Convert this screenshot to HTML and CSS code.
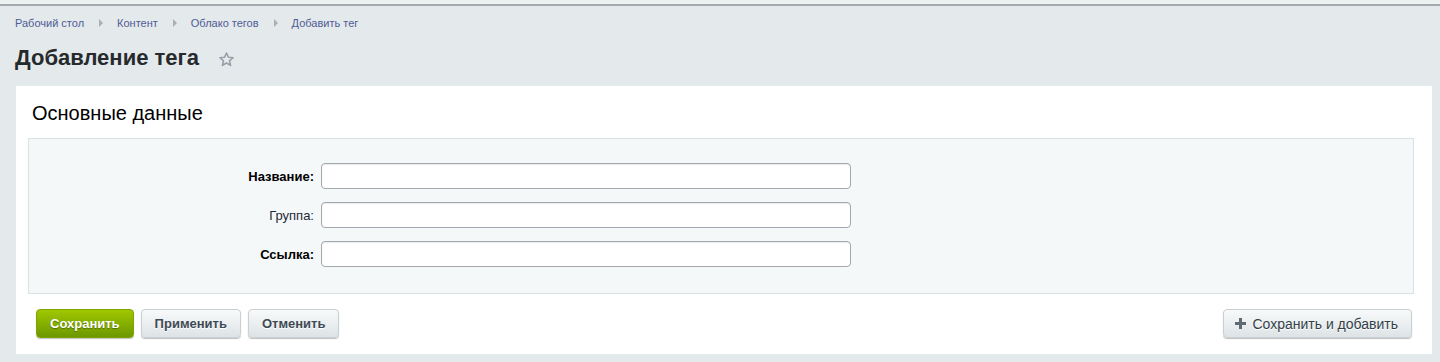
FILE: index.html
```html
<!DOCTYPE html>
<html>

<head>
  <meta name="viewport" content="width=device-width, initial-scale=1">
  <link rel="stylesheet" href="styles.css">
</head>

<body>

  <div class="topline"></div>

  <div class="breadcrumbs">
    <a href="#">Рабочий стол</a>
    <span class="crumb-arrow"></span>
    <a href="#">Контент</a>
    <span class="crumb-arrow"></span>
    <a href="#">Облако тегов</a>
    <span class="crumb-arrow"></span>
    <a href="#">Добавить тег</a>
  </div>

  <h1 class="page-title">
    Добавление тега
    <svg class="star" width="17" height="17" viewBox="0 0 24 24">
      <path d="M12 2.8l2.7 6.1 6.6.6-5 4.4 1.5 6.5L12 17l-5.8 3.4 1.5-6.5-5-4.4 6.6-.6z" fill="none" stroke="#959fa8" stroke-width="2.2" stroke-linejoin="round" />
    </svg>
  </h1>

  <div class="card">
    <div class="card-title">Основные данные</div>

    <div class="edit-panel">
      <div class="field">
        <label class="field-label required">Название:</label>
        <input class="field-input" type="text">
      </div>
      <div class="field">
        <label class="field-label">Группа:</label>
        <input class="field-input" type="text">
      </div>
      <div class="field">
        <label class="field-label required">Ссылка:</label>
        <input class="field-input" type="text">
      </div>
    </div>

    <div class="buttons">
      <button class="btn btn-save">Сохранить</button>
      <button class="btn">Применить</button>
      <button class="btn">Отменить</button>
      <button class="btn btn-add">
        <svg width="11" height="11" viewBox="0 0 11 11">
          <path d="M4 0h3v4h4v3H7v4H4V7H0V4h4z" fill="#5f6a72" />
        </svg>
        Сохранить и добавить
      </button>
    </div>
  </div>

</body>

</html>
```

FILE: styles.css
```css
body {
  margin: 0;
  background: #e4e9eb;
  font-family: "Liberation Sans", Arial, sans-serif;
  color: #333;
}

.topline {
  height: 4px;
  background: #eef1f2;
  border-bottom: 2px solid #a4aaad;
}

.breadcrumbs {
  display: flex;
  align-items: center;
  padding: 10px 15px 0;
  height: 14px;
  font-size: 11px;
  line-height: 14px;
}

.breadcrumbs a {
  color: #4f5c96;
  text-decoration: none;
}

.crumb-arrow {
  width: 0;
  height: 0;
  margin: 0 14px 0 15px;
  border-top: 4px solid transparent;
  border-bottom: 4px solid transparent;
  border-left: 4px solid #a9b0b4;
}

.page-title {
  display: flex;
  align-items: center;
  margin: 15px 0 0 15px;
  height: 26px;
  font-size: 22px;
  line-height: 26px;
  font-weight: bold;
  color: #262a2d;
}

.star {
  margin-left: 19px;
  margin-top: 2px;
}

.card {
  margin: 15px 8px 0 16px;
  padding: 0 18px 0 12px;
  background: #fff;
}

.card-title {
  padding: 15px 4px 0;
  font-size: 20px;
  line-height: 24px;
  color: #000;
}

.edit-panel {
  margin-top: 13px;
  padding: 24px 0 26px;
  background: #f5f8f9;
  border: 1px solid #dbe2e5;
  display: flex;
  flex-direction: column;
  gap: 13px;
}

.field {
  display: flex;
  align-items: center;
}

.field-label {
  width: 285px;
  padding-right: 7px;
  text-align: right;
  font-size: 13px;
  color: #1d2b33;
}

.field-label.required {
  font-weight: bold;
  color: #000;
}

.field-input {
  width: 530px;
  height: 26px;
  box-sizing: border-box;
  margin: 0;
  border: 1px solid #a2a8ad;
  border-radius: 4px;
  background: #fff;
  box-shadow: inset 0 1px 1px rgba(0, 0, 0, 0.08);
  font-family: inherit;
  font-size: 13px;
}

.buttons {
  display: flex;
  align-items: center;
  gap: 7px;
  padding: 15px 2px 16px 8px;
}

.btn {
  height: 29px;
  padding: 0 13px;
  border: 1px solid #c8d0d4;
  border-radius: 4px;
  background: linear-gradient(#f8fafa, #dde3e6);
  box-shadow: 0 1px 1px rgba(0, 0, 0, 0.25);
  font-family: inherit;
  font-size: 13px;
  font-weight: bold;
  color: #3f4b54;
  text-shadow: 0 1px 0 #fff;
  cursor: pointer;
}

.btn-save {
  padding: 0 13px;
  border-color: #7fa400;
  background: linear-gradient(#a0c700, #6c9800);
  color: #fff;
  text-shadow: 0 1px 1px rgba(0, 0, 0, 0.35);
}

.btn-add {
  display: flex;
  align-items: center;
  gap: 6px;
  margin-left: auto;
  padding: 0 13px 0 11px;
  font-weight: normal;
  font-size: 14px;
  color: #333f48;
}
```
